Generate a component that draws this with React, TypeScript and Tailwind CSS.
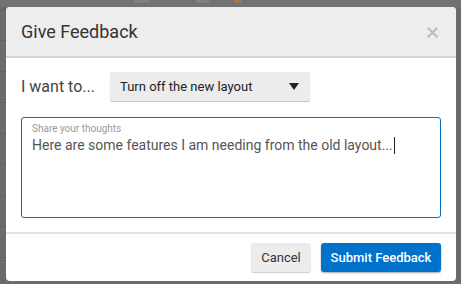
import React from "react";

export default function App() {
  const font = { fontFamily: "Roboto, 'Noto Sans', Arial, sans-serif" };
  return (
    <div
      className="w-[461px] h-[284px] bg-[#6b6b6b] relative overflow-hidden pt-[7px] pl-[6px]"
      style={font}
    >
      {/* faint background page hints */}
      <div className="absolute left-0 top-0 w-[461px] h-[7px] bg-[#727272]" />
      <div className="absolute left-[134px] top-0 w-[15px] h-[3px] bg-[#808080]" />
      <div className="absolute left-[196px] top-0 w-[13px] h-[3px] bg-[#808080]" />
      <div className="absolute left-[234px] top-0 w-[8px] h-[3px] rounded-b-full bg-[#a7774a]" />
      {[9, 40, 71, 102, 133, 164, 195, 226, 257].map((y) => (
        <div key={y} className="absolute left-0 w-[6px] h-px bg-[#5a5f5f]" style={{ top: y }} />
      ))}
      <div className="relative w-[450px] h-[274px] bg-white rounded-[4px] overflow-hidden flex flex-col">
        <div className="h-[51px] bg-[#ededed] border-b-2 border-[#d6d6d6] flex items-center justify-between pl-[15px] pr-[18px]">
          <span className="text-[18px] text-[#333] leading-none">Give Feedback</span>
          <svg width="11" height="11" viewBox="0 0 11 11" className="mt-[1px]">
            <path d="M1.5 1.5 L9.5 9.5 M9.5 1.5 L1.5 9.5" stroke="#bdbdbd" strokeWidth="2.2" strokeLinecap="square" />
          </svg>
        </div>
        <div className="px-[15px] pt-[14px]">
          <div className="flex items-center h-[29px]">
            <span className="w-[89px] text-[16px] text-[#444]">I want to...</span>
            <div className="w-[200px] h-[29px] bg-[#ececec] rounded-[3px] shadow-[0_1px_1px_rgba(0,0,0,0.25)] flex items-center justify-between pl-[10px] pr-[11px]">
              <span className="text-[13px] text-[#222]">Turn off the new layout</span>
              <svg width="10" height="7" viewBox="0 0 10 7">
                <path d="M0 0 H10 L5 7 Z" fill="#222" />
              </svg>
            </div>
          </div>
          <div className="mt-[16px] h-[101px] border border-[#0b6fc0] rounded-[3px] px-[10px] pt-[4px]">
            <div className="text-[10px] leading-[13px] text-[#9a9a9a]">Share your thoughts</div>
            <div className="text-[14px] leading-[20px] text-[#555] flex items-center">
              Here are some features I am needing from the old layout...
              <span className="inline-block w-px h-[17px] bg-[#222] ml-[1px]" />
            </div>
          </div>
        </div>
        <div className="mt-[14px] border-t-2 border-[#e3e3e3] flex justify-end gap-[10px] pt-[9px] pr-[15px]">
          <button className="w-[60px] h-[29px] rounded-[3px] bg-[#ececec] shadow-[0_1px_1px_rgba(0,0,0,0.2)] text-[13px] text-[#333]">
            Cancel
          </button>
          <button className="w-[120px] h-[29px] rounded-[3px] bg-[#0072cc] shadow-[0_1px_2px_rgba(0,0,0,0.35)] text-[13px] font-medium text-white">
            Submit Feedback
          </button>
        </div>
      </div>
    </div>
  );
}
